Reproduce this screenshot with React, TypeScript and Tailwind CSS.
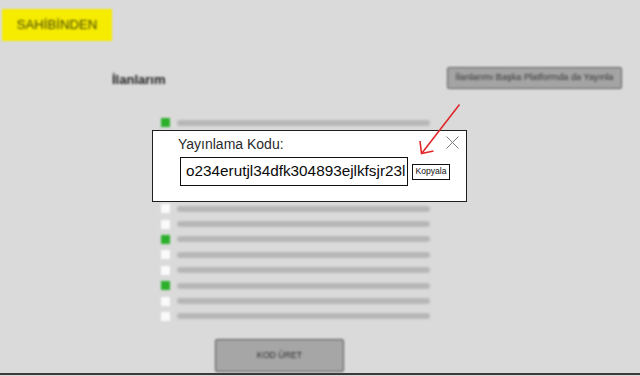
import React from "react"

const rows = [false, false, true, false, false, true, false, false]

function Row({ on }: { on: boolean }) {
    return (
        <div className="flex h-[15.4px] items-center pl-[161px]">
            <div className={on ? "h-[9px] w-[9px] bg-[#2bb02b]" : "h-[9px] w-[9px] bg-[#fafafa]"}></div>
            <div className="ml-[7px] h-[6px] w-[253px] rounded-full bg-[#b7b7b7]"></div>
        </div>
    )
}

export default function App() {
    return (
        <div className="relative flex h-[376px] w-[640px] flex-col overflow-hidden bg-[#dadada] font-['Liberation_Sans',Arial,sans-serif]">
            <div className="flex h-[373px] flex-col blur-[0.9px]">
                <div className="pl-[2px] pt-[9px]">
                    <div className="flex h-[32px] w-[110px] items-center justify-center bg-[#f5ec00] text-[13.2px] text-[#45420e]">
                        SAHİBİNDEN
                    </div>
                </div>
                <div className="mt-[26px] flex h-[22px] items-center justify-between pr-[18px]">
                    <div className="pl-[112px] pt-[3px] text-[13px] font-bold text-[#1e1e1e]">İlanlarım</div>
                    <div className="flex h-[22px] w-[175px] items-center justify-center rounded-[2px] border border-[#5e5e5e] bg-[#a4a4a4] text-[9.2px] text-[#333]">
                        İlanlarımı Başka Platformda da Yayınla
                    </div>
                </div>
                <div className="mt-[26px]">
                    <Row on={true} />
                </div>
                <div className="h-[70.6px]"></div>
                {rows.map((on, i) => (
                    <Row key={i} on={on} />
                ))}
                <div className="mt-[15px] pl-[215px]">
                    <div className="flex h-[33px] w-[129px] items-center justify-center rounded-[2px] border-[1.5px] border-[#555] bg-[#a6a6a6] text-[8.8px] text-[#2a2a2a]">
                        KOD ÜRET
                    </div>
                </div>
            </div>
            <div className="h-[2px] bg-[#3a3a3a]"></div>
            <div className="h-[1px] bg-[#dadada]"></div>

            {/* modal */}
            <div className="absolute left-[152px] top-[130px] h-[72px] w-[315px] border-[1.5px] border-[#1e1e1e] bg-white">
                <div className="pl-[25px] pt-[3px] text-[14px] leading-[20px] text-[#2a2a2a]">Yayınlama Kodu:</div>
                <div className="mt-[3px] flex items-center pl-[27px]">
                    <div className="flex h-[29px] w-[228px] items-center border-[1.5px] border-[#111] pl-[5px] text-[15.3px] text-[#0a0a0a]">
                        o234erutjl34dfk304893ejlkfsjr23l
                    </div>
                    <div className="ml-[4px] flex h-[16px] w-[38px] items-center justify-center border border-[#111] text-[8.6px] text-[#111]">
                        Kopyala
                    </div>
                </div>
                <svg className="absolute right-[7px] top-[5px]" width="13" height="13" viewBox="0 0 13 13">
                    <path d="M0.5 0.5 L12.5 12.5 M12.5 0.5 L0.5 12.5" stroke="#7a7a7a" strokeWidth="1" fill="none" />
                </svg>
            </div>

            {/* arrow */}
            <svg className="pointer-events-none absolute left-0 top-0" width="640" height="376" viewBox="0 0 640 376">
                <path d="M459.5 104.5 L422 153" stroke="#e0282a" strokeWidth="1.6" fill="none" />
                <path d="M420 141 L421.5 153.5 L433.5 151" stroke="#e0282a" strokeWidth="1.6" fill="none" />
            </svg>
        </div>
    )
}
